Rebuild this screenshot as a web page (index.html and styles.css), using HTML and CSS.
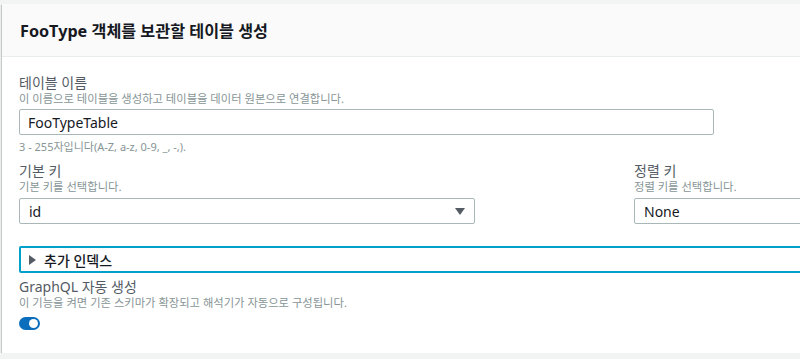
FILE: index.html
```html
<!DOCTYPE html>
<html lang="ko">
<head>
    <meta charset="UTF-8">
    <meta name="viewport" content="width=device-width, initial-scale=1.0">
    <title>테이블 생성</title>
    <link rel="stylesheet" href="styles.css">
</head>
<body>
    <div class="card">
        <div class="card-header">
            <h2>FooType 객체를 보관할 테이블 생성</h2>
        </div>
        <div class="card-body">
            <!-- Table name -->
            <div class="field">
                <label class="field-label" for="tableName">테이블 이름</label>
                <div class="field-desc">이 이름으로 테이블을 생성하고 테이블을 데이터 원본으로 연결합니다.</div>
                <input type="text" id="tableName" class="text-input" value="FooTypeTable">
                <div class="field-hint">3 - 255자입니다(A-Z, a-z, 0-9, _, -,).</div>
            </div>

            <!-- Keys -->
            <div class="key-row">
                <div class="field">
                    <div class="field-label">기본 키</div>
                    <div class="field-desc">기본 키를 선택합니다.</div>
                    <div class="select primary-select">
                        <span>id</span>
                        <span class="caret"></span>
                    </div>
                </div>
                <div class="field">
                    <div class="field-label">정렬 키</div>
                    <div class="field-desc">정렬 키를 선택합니다.</div>
                    <div class="select sort-select">
                        <span>None</span>
                    </div>
                </div>
            </div>

            <!-- Extra indexes -->
            <div class="expander">
                <span class="expander-icon"></span>
                <span>추가 인덱스</span>
            </div>

            <!-- GraphQL -->
            <div class="field graphql">
                <div class="field-label">GraphQL 자동 생성</div>
                <div class="field-desc">이 기능을 켜면 기존 스키마가 확장되고 해석기가 자동으로 구성됩니다.</div>
                <div class="toggle on"><span class="knob"></span></div>
            </div>
        </div>
    </div>
</body>
</html>
```

FILE: styles.css
```css
:root {
    --bg-color: #f2f3f3;
    --card-bg: #ffffff;
    --header-bg: #fafafa;
    --title-color: #16191f;
    --label-color: #545b64;
    --desc-color: #879596;
    --border-color: #aab7b8;
    --accent-color: #00a1c9;
    --toggle-color: #0a6ebd;
}

body {
    font-family: "Noto Sans", "Noto Sans CJK KR", sans-serif;
    background-color: var(--bg-color);
    margin: 0;
    overflow: hidden;
}

.card {
    width: 860px;
    margin: 4px 0 0 2px;
    background-color: var(--card-bg);
    box-shadow: 0 1px 1px 0 rgba(0, 28, 36, 0.3), 1px 1px 1px 0 rgba(0, 28, 36, 0.15), -1px 1px 1px 0 rgba(0, 28, 36, 0.15);
}

.card-header {
    background-color: var(--header-bg);
    border-bottom: 1px solid #eaeded;
    height: 52px;
    padding: 0 18px;
    display: flex;
    align-items: center;
}

.card-header h2 {
    margin: 0;
    font-size: 16.2px;
    font-weight: bold;
    color: var(--title-color);
    line-height: 20px;
    padding-top: 1px;
}

.card-body {
    padding: 17px 17px 23px;
}

.field-label {
    display: block;
    font-size: 14px;
    line-height: 18px;
    color: var(--label-color);
}

.field-desc {
    font-size: 11.3px;
    line-height: 14px;
    color: var(--desc-color);
}

.field-hint {
    margin-top: 4px;
    font-size: 11px;
    line-height: 16px;
    color: var(--desc-color);
}

.text-input {
    display: block;
    box-sizing: border-box;
    width: 695px;
    height: 26px;
    margin-top: 3px;
    padding: 0 8px;
    border: 1px solid var(--border-color);
    border-radius: 2px;
    font-family: inherit;
    font-size: 14px;
    color: var(--title-color);
}

.key-row {
    display: grid;
    grid-template-columns: 615px 1fr;
    margin-top: 7px;
}

.select {
    box-sizing: border-box;
    height: 26px;
    margin-top: 4px;
    padding: 0 9px 0 9px;
    border: 1px solid var(--border-color);
    border-radius: 2px;
    display: flex;
    align-items: center;
    justify-content: space-between;
    font-size: 14px;
    color: var(--title-color);
}

.primary-select {
    width: 456px;
}

.caret {
    width: 0;
    height: 0;
    border-left: 5px solid transparent;
    border-right: 5px solid transparent;
    border-top: 7px solid #545b64;
}

.expander {
    box-sizing: border-box;
    height: 27px;
    margin-top: 22px;
    border: 2px solid var(--accent-color);
    border-radius: 2px;
    padding: 0 8px;
    display: flex;
    align-items: center;
    gap: 8px;
    font-size: 14px;
    font-weight: 500;
    color: var(--title-color);
}

.expander-icon {
    width: 0;
    height: 0;
    border-top: 5px solid transparent;
    border-bottom: 5px solid transparent;
    border-left: 7px solid #545b64;
}

.graphql {
    margin-top: 5px;
}

.toggle {
    width: 21px;
    height: 13px;
    margin-top: 7px;
    border-radius: 7px;
    background-color: #aab7b8;
    display: flex;
    align-items: center;
    padding: 0 2px;
    box-sizing: border-box;
}

.toggle.on {
    background-color: var(--toggle-color);
    justify-content: flex-end;
}

.knob {
    width: 9px;
    height: 9px;
    border-radius: 50%;
    background-color: #ffffff;
}
```
